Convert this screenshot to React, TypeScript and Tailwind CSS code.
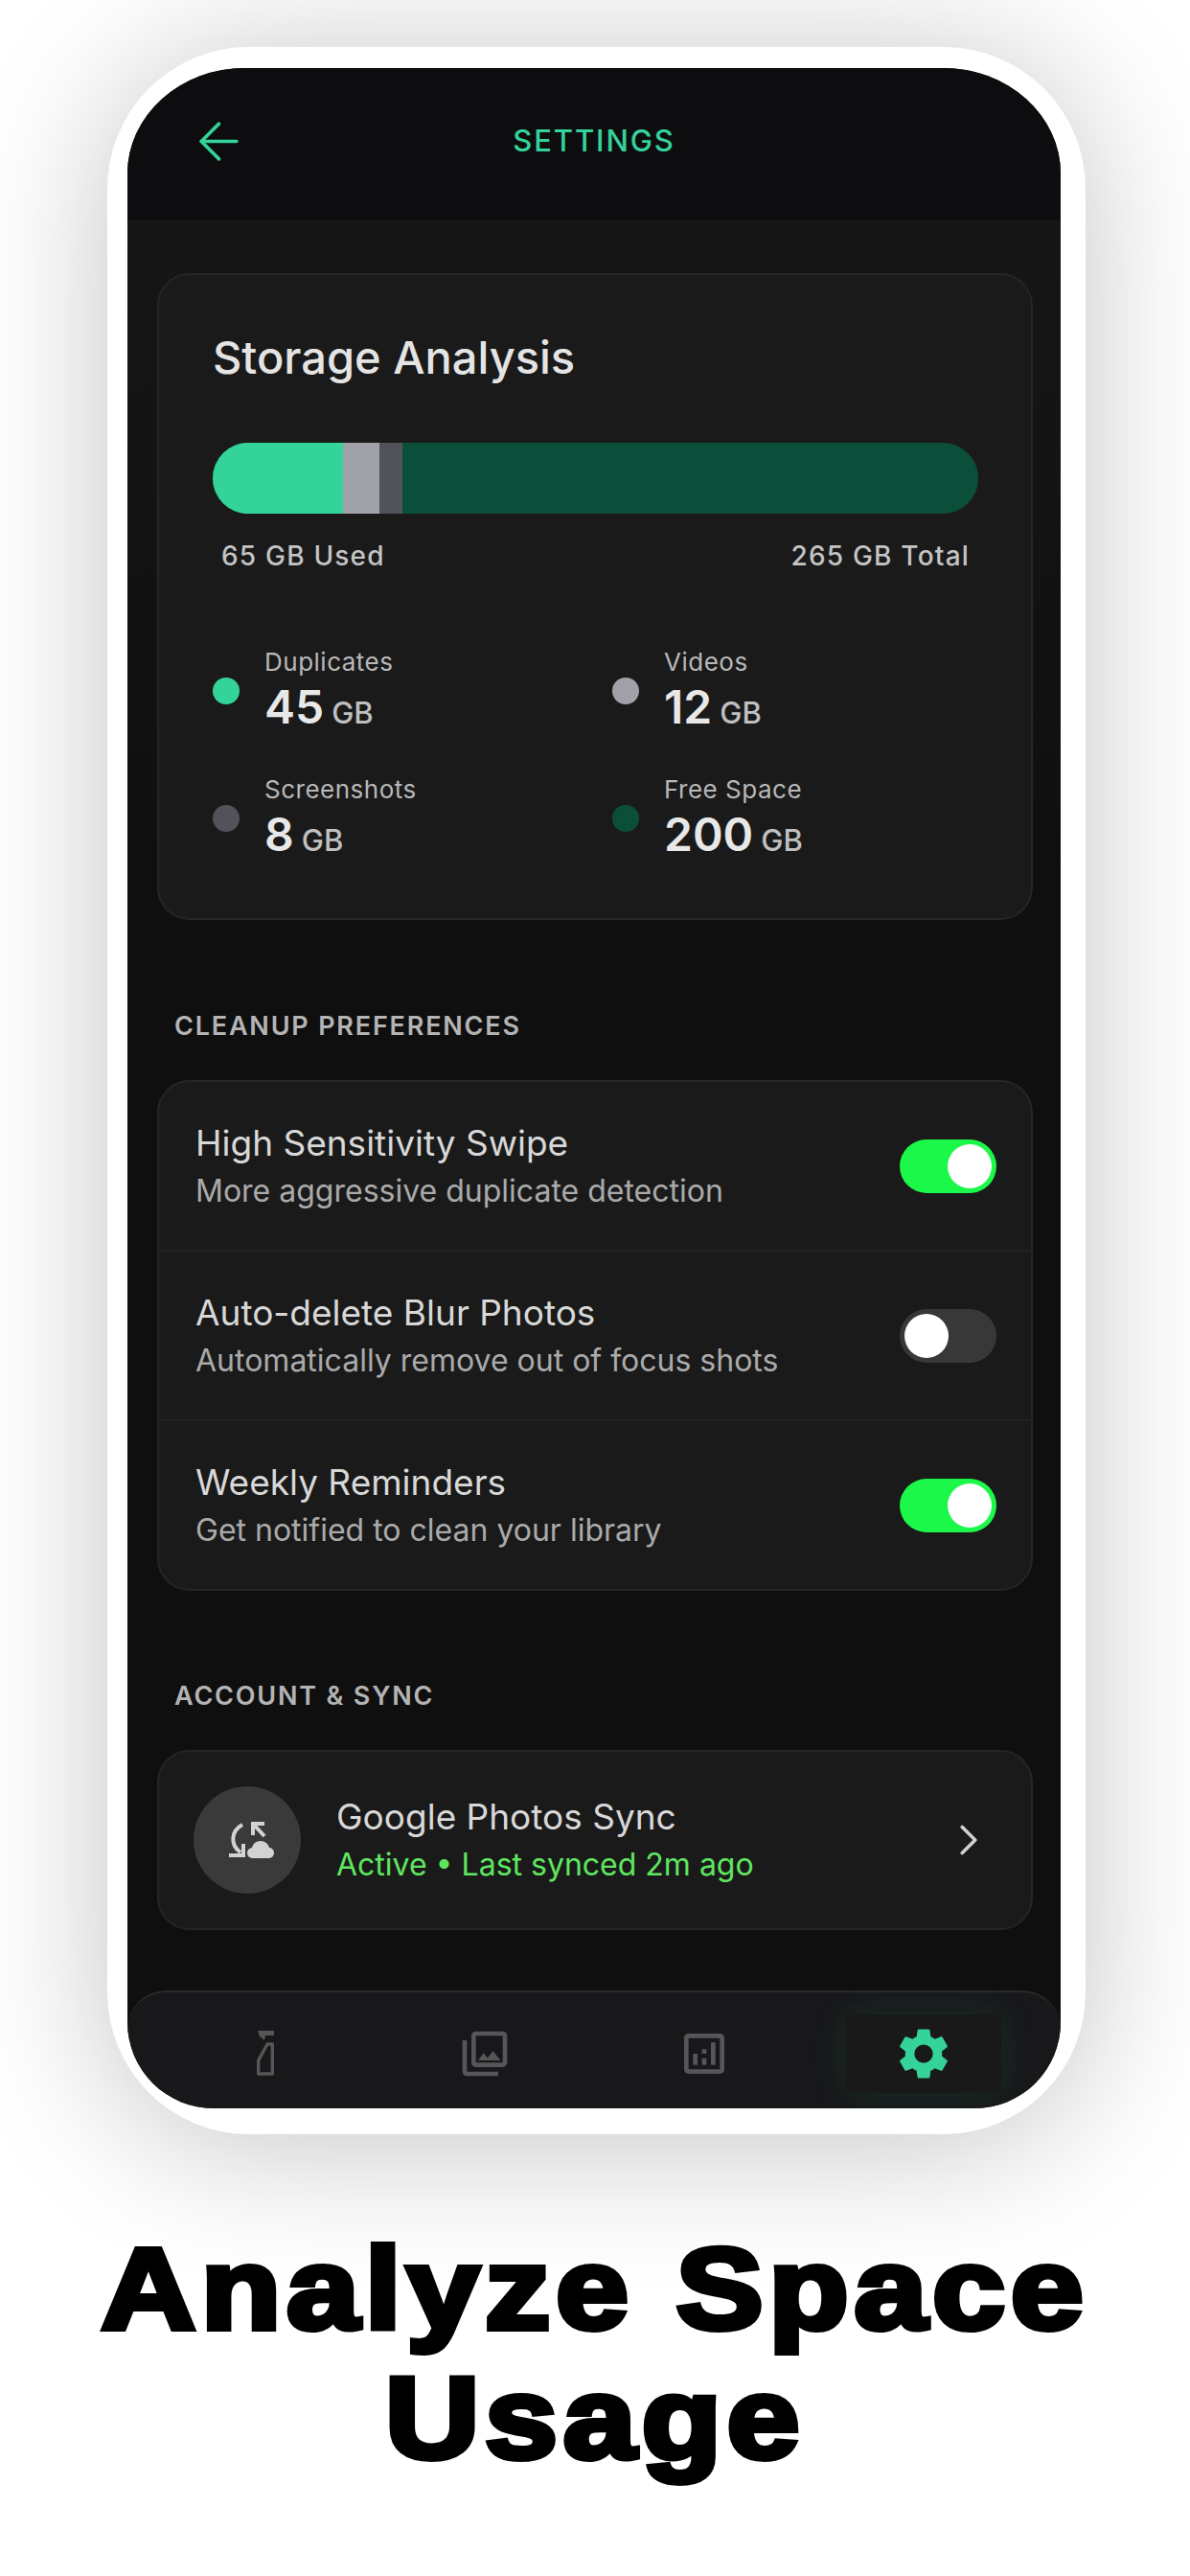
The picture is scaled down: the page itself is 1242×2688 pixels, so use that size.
import React from 'react';
import { ArrowLeft, ChevronRight } from 'lucide-react';
import { MdOutlinePhotoLibrary, MdOutlineAnalytics, MdSettings } from 'react-icons/md';

const legend = [
    { name: 'Duplicates', value: '45', dot: 'bg-[#34d399]' },
    { name: 'Videos', value: '12', dot: 'bg-[#a1a1aa]' },
    { name: 'Screenshots', value: '8', dot: 'bg-[#52525b]' },
    { name: 'Free Space', value: '200', dot: 'bg-[#0b4f3a]' },
];

const prefs = [
    { title: 'High Sensitivity Swipe', sub: 'More aggressive duplicate detection', on: true },
    { title: 'Auto-delete Blur Photos', sub: 'Automatically remove out of focus shots', on: false },
    { title: 'Weekly Reminders', sub: 'Get notified to clean your library', on: true },
];

function Toggle({ on }: { on: boolean }) {
    return (
        <div className={`w-[101px] h-[56px] rounded-full flex items-center px-[5px] ${on ? 'bg-[#1cf84a] justify-end' : 'bg-[#383838] justify-start'}`}>
            <div className="w-[46px] h-[46px] rounded-full bg-white" />
        </div>
    );
}

function SprayIcon() {
    return (
        <svg width="18" height="47" viewBox="0 0 18 47" fill="none">
            <path d="M1 0H18V5H9L8 10L3 6z" fill="#565658" />
            <path d="M11 14H16.3V45H1.7V31z" stroke="#565658" strokeWidth="3.4" strokeLinejoin="round" />
        </svg>
    );
}

function CloudSyncIcon() {
    return (
        <svg width="47" height="38" viewBox="0 0 47 38" fill="none" className="ml-[8px]">
            <path d="M14 3C3 9 0 23 12 32" stroke="#d2d2d2" strokeWidth="4" />
            <path d="M0 35H15V23" stroke="#d2d2d2" strokeWidth="4" />
            <path d="M37 2H25V14M25 2L37 15" stroke="#d2d2d2" strokeWidth="4" />
            <path d="M25 38c-3.500 0-6-2.500-6-5.500c0-3 2-5 5-5.500c1-4 4-7 9-7c4.500 0 8 3 9 7c3 0 5 2.500 5 5.500c0 3-2.500 5.500-5.500 5.500z" fill="#d2d2d2" />
        </svg>
    );
}

export default function App() {
    return (
        <div className="w-[1242px] h-[2688px] bg-white overflow-hidden pt-[49px] font-['Inter','Noto_Sans',sans-serif]">
            {/* phone frame */}
            <div className="ml-[112px] w-[1021px] h-[2178px] bg-white rounded-[148px] pt-[22px] pl-[21px] pr-[26px] pb-[27px] shadow-[0_10px_150px_rgba(0,0,0,0.24)]">
                <div className="h-full flex flex-col overflow-hidden bg-[#0f0f10] rounded-[123px_123px_90px_90px/110px_110px_90px_90px]">
                    <header className="h-[159px] shrink-0 bg-[#0d0d0f] flex items-center justify-between pb-[7px] px-[64px]">
                        <ArrowLeft size={63} strokeWidth={1.35} color="#34d399" />
                        <h1 className="text-[31px] font-medium tracking-[1.9px] text-[#34d399]">SETTINGS</h1>
                        <div className="w-[63px]" />
                    </header>

                    <main className="flex-1 min-h-0 pl-[31px] pr-[29px] pt-[55px] bg-gradient-to-b from-[#161616] to-[#0f0f0f] to-[38%]">
                        <section className="h-[675px] rounded-[34px] border-2 border-[#262626] bg-[#1a1a1a] pl-[56px] pr-[55px] pt-[59px]">
                            <h2 className="text-[47px] leading-[54px] font-medium text-[#e4e4e4]">Storage Analysis</h2>
                            <div className="mt-[62px] h-[74px] rounded-full overflow-hidden flex bg-[#0b4f3a]">
                                <div className="w-[136px] bg-[#34d399]" />
                                <div className="w-[38px] bg-[#a1a1aa]" />
                                <div className="w-[24px] bg-[#52525b]" />
                            </div>
                            <div className="mt-[28px] px-[9px] flex justify-between text-[28px] leading-[32px] font-medium tracking-[1.2px] text-[#c4c4c4]">
                                <span>65 GB Used</span>
                                <span>265 GB Total</span>
                            </div>
                            <div className="mt-[80px] grid grid-cols-[417px_1fr] gap-y-[43px]">
                                {legend.map((item) => (
                                    <div key={item.name} className="flex items-center gap-[26px]">
                                        <span className={`w-[28px] h-[28px] rounded-full ${item.dot}`} />
                                        <div>
                                            <p className="text-[26px] leading-[30px] tracking-[0.5px] text-[#b8b8b8]">{item.name}</p>
                                            <p className="mt-[3px] h-[57px] flex items-baseline text-[#e8e8e8]">
                                                <span className="text-[48px] leading-[57px] font-semibold">{item.value}</span>
                                                <span className="text-[31px] leading-[57px] font-medium text-[#c0c0c0] ml-[8px]">GB</span>
                                            </p>
                                        </div>
                                    </div>
                                ))}
                            </div>
                        </section>

                        <h3 className="mt-[94px] ml-[18px] text-[27px] leading-[34px] font-semibold tracking-[1.8px] text-[#b4b4b4]">CLEANUP PREFERENCES</h3>
                        <section className="mt-[39px] h-[533px] flex flex-col rounded-[34px] border-2 border-[#262626] bg-[#1a1a1a] divide-y-2 divide-[#222222]">
                            {prefs.map((row) => (
                                <div key={row.title} className="flex-1 flex items-center justify-between pl-[38px] pr-[36px]">
                                    <div>
                                        <p className="text-[37px] leading-[44px] text-[#d8d8d8]">{row.title}</p>
                                        <p className="mt-[8px] text-[32px] leading-[40px] text-[#aaaaaa]">{row.sub}</p>
                                    </div>
                                    <Toggle on={row.on} />
                                </div>
                            ))}
                        </section>

                        <h3 className="mt-[93px] ml-[18px] text-[27px] leading-[34px] font-semibold tracking-[1.8px] text-[#b4b4b4]">ACCOUNT &amp; SYNC</h3>
                        <section className="mt-[39px] h-[188px] rounded-[34px] border-2 border-[#262626] bg-[#1a1a1a] flex items-center pl-[36px] pr-[38px]">
                            <div className="w-[112px] h-[112px] rounded-full bg-[#3a3a3a] flex items-center justify-center">
                                <CloudSyncIcon />
                            </div>
                            <div className="ml-[37px] flex-1 pb-[1px]">
                                <p className="text-[37px] leading-[44px] text-[#d8d8d8]">Google Photos Sync</p>
                                <p className="mt-[8px] text-[32px] leading-[40px] text-[#5fe65f]">Active • Last synced 2m ago</p>
                            </div>
                            <ChevronRight size={54} strokeWidth={1.6} color="#d0d0d0" />
                        </section>
                    </main>

                    <nav className="h-[123px] shrink-0 bg-[#18181a] border-t-2 border-[#2a2a2c] rounded-t-[40px] grid grid-cols-4 items-center px-[29px] pt-[6px]">
                        <div className="flex justify-center"><SprayIcon /></div>
                        <div className="flex justify-center"><MdOutlinePhotoLibrary size={56} color="#565658" /></div>
                        <div className="flex justify-center"><MdOutlineAnalytics size={56} color="#565658" /></div>
                        <div className="flex justify-center">
                            <div className="w-[162px] h-[82px] flex items-center justify-center bg-[#19191a] shadow-[0_0_36px_rgba(52,211,153,0.12)]">
                                <MdSettings size={64} color="#34d399" />
                            </div>
                        </div>
                    </nav>
                </div>
            </div>

            <p className="mt-[94px] text-center font-['Liberation_Sans',Arial,sans-serif] font-bold text-[121px] leading-[135px] tracking-[5px] text-black scale-x-[1.13] [-webkit-text-stroke:6px_black]">
                Analyze Space
                <br />
                Usage
            </p>
        </div>
    );
}
